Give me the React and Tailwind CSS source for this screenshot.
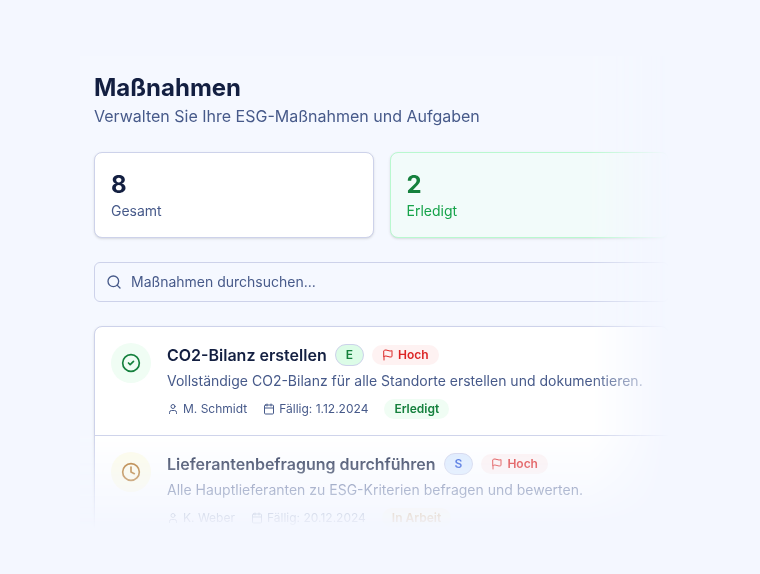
import React, { useState } from 'react';
import { Calendar, CircleCheck, Clock, Search, User } from 'lucide-react';

const STATS = [
    { label: 'Gesamt', value: 8, card: 'bg-white border-[#cdd2ea]', number: 'text-[#131f41]', text: 'text-[#475a8a]' },
    { label: 'Erledigt', value: 2, card: 'bg-[#f2fbfa] border-[#b9f8cf]', number: 'text-[#15803d]', text: 'text-[#16a34a]' },
];

const STATUS = {
    done: { label: 'Erledigt', icon: CircleCheck, circle: 'bg-green-50 text-[#15803d]', badge: 'bg-green-50 text-[#15803d]' },
    progress: { label: 'In Arbeit', icon: Clock, circle: 'bg-[#fefce8] text-[#a8620a]', badge: 'bg-[#fefce8] text-[#b4690e]' },
};

const CATEGORY = {
    E: 'bg-[#dcfce7] text-[#15803d]',
    S: 'bg-[#dbeafe] text-[#1d4ed8]',
};

const MEASURES = [
    {
        id: 1,
        title: 'CO2-Bilanz erstellen',
        description: 'Vollständige CO2-Bilanz für alle Standorte erstellen und dokumentieren.',
        category: 'E',
        priority: 'Hoch',
        owner: 'M. Schmidt',
        due: '1.12.2024',
        status: 'done',
    },
    {
        id: 2,
        title: 'Lieferantenbefragung durchführen',
        description: 'Alle Hauptlieferanten zu ESG-Kriterien befragen und bewerten.',
        category: 'S',
        priority: 'Hoch',
        owner: 'K. Weber',
        due: '20.12.2024',
        status: 'progress',
    },
];

const FlagIcon = () => (
    <svg className="size-3" viewBox="0 0 24 24" fill="none" stroke="currentColor" strokeWidth="2" strokeLinecap="round" strokeLinejoin="round" aria-hidden="true">
        <path d="M4 15s1-1 4-1 5 2 8 2 4-1 4-1V3s-1 1-4 1-5-2-8-2-4 1-4 1z" />
        <path d="M4 22v-7" />
    </svg>
);

const StatCard = ({ stat }) => (
    <div className={`rounded-lg border p-4 shadow-sm ${stat.card}`}>
        <p className={`text-2xl font-bold ${stat.number}`}>{stat.value}</p>
        <p className={`text-sm ${stat.text}`}>{stat.label}</p>
    </div>
);

const MeasureItem = ({ measure }) => {
    const status = STATUS[measure.status];
    const StatusIcon = status.icon;

    return (
        <li className="flex items-start gap-4 border-b border-[#cdd2ea] p-4 whitespace-nowrap last:border-b-0">
            <div className={`flex size-10 shrink-0 items-center justify-center rounded-full ${status.circle}`}>
                <StatusIcon className="size-5" />
            </div>
            <div className="min-w-0 flex-1">
                <div className="flex h-6 items-center gap-2">
                    <h3 className="font-semibold text-[#131f41]">{measure.title}</h3>
                    <span className={`rounded-full border border-[#cdd2ea] px-2.5 py-0.5 text-xs font-semibold ${CATEGORY[measure.category]}`}>
                        {measure.category}
                    </span>
                    <span className="flex items-center gap-1 rounded-full bg-red-50 px-2.5 py-0.5 text-xs font-semibold text-[#dc2626]">
                        <FlagIcon />
                        {measure.priority}
                    </span>
                </div>
                <p className="mt-1 text-sm text-[#475a8a]">{measure.description}</p>
                <div className="mt-2 flex items-center gap-4 text-xs text-[#475a8a]">
                    <span className="flex items-center gap-1">
                        <User className="size-3" />
                        {measure.owner}
                    </span>
                    <span className="flex items-center gap-1">
                        <Calendar className="size-3" />
                        Fällig: {measure.due}
                    </span>
                    <span className={`rounded-full px-2.5 py-0.5 font-semibold ${status.badge}`}>{status.label}</span>
                </div>
            </div>
        </li>
    );
};

export default function App() {
    const [query, setQuery] = useState('');
    const visible = MEASURES.filter(m => m.title.toLowerCase().includes(query.toLowerCase()));

    return (
        <div className="min-h-screen bg-[#f4f7ff] pt-14 pr-[91px] pb-4 pl-20 font-['Inter',sans-serif]">
            {/* Vorschau läuft rechts und unten weich aus */}
            <main className="space-y-6 bg-[#f5f8ff] pt-4 pl-3.5 mask-r-from-[calc(100%-80px)] mask-r-to-100% mask-b-from-[calc(100%-114px)] mask-b-to-[calc(100%-16px)]">
                <header>
                    <h1 className="text-2xl font-bold text-[#131f41]">Maßnahmen</h1>
                    <p className="text-base text-[#475a8a]">Verwalten Sie Ihre ESG-Maßnahmen und Aufgaben</p>
                </header>

                <section className="grid grid-cols-2 gap-4">
                    {STATS.map(stat => (
                        <StatCard key={stat.label} stat={stat} />
                    ))}
                </section>

                <label className="flex h-10 items-center gap-[9px] rounded-md border border-[#cdd2ea] px-[11px] text-[#475a8a]">
                    <Search className="size-4 shrink-0" />
                    <input
                        type="text"
                        aria-label="Maßnahmen durchsuchen"
                        placeholder="Maßnahmen durchsuchen..."
                        value={query}
                        onChange={(e) => setQuery(e.target.value)}
                        className="w-full bg-transparent text-sm outline-none placeholder:text-[#475a8a]"
                    />
                </label>

                <ul className="rounded-lg border border-[#cdd2ea] bg-white shadow-sm">
                    {visible.map(measure => (
                        <MeasureItem key={measure.id} measure={measure} />
                    ))}
                </ul>
            </main>
        </div>
    );
}
